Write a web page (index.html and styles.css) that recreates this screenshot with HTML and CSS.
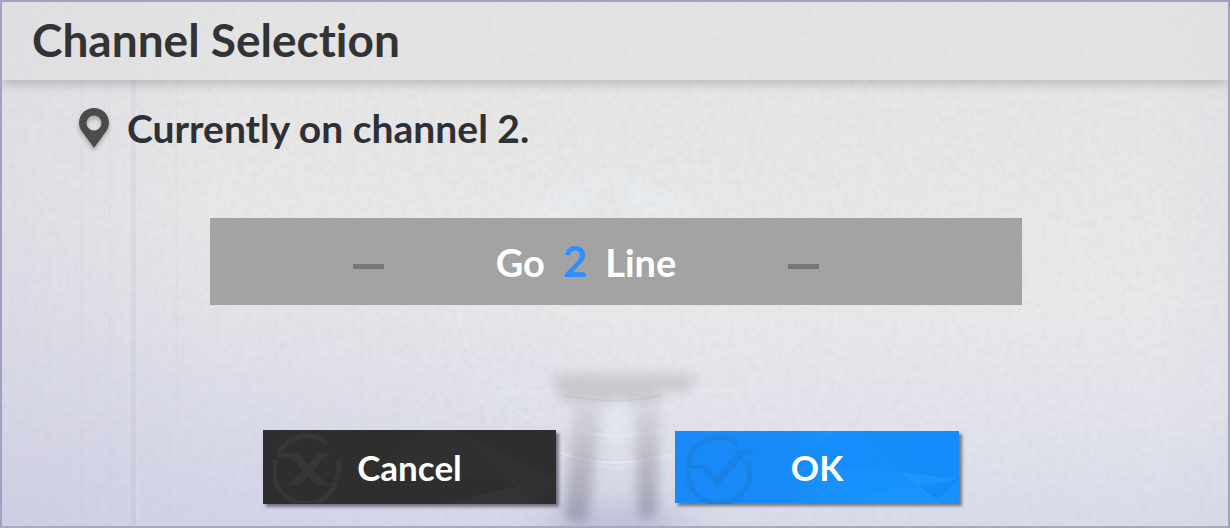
FILE: index.html
```html
<!DOCTYPE html>
<html lang="en">
<head>
<meta charset="utf-8">
<meta name="viewport" content="width=device-width, initial-scale=1">
<title>Channel Selection</title>
<link rel="stylesheet" href="styles.css">
</head>
<body>
<main class="dialog" role="dialog" aria-labelledby="dialog-title">
  <svg class="scene" viewBox="0 0 1230 528" preserveAspectRatio="xMidYMid slice" aria-hidden="true">
    <defs>
      <filter id="grain" x="0" y="0" width="100%" height="100%">
        <feTurbulence type="fractalNoise" baseFrequency="0.14" numOctaves="3" seed="4"/>
        <feColorMatrix values="0 0 0 0 0.45  0 0 0 0 0.45  0 0 0 0 0.48  0.22 0 0 0 -0.085"/>
      </filter>
      <filter id="soft" x="-30%" y="-30%" width="160%" height="160%"><feGaussianBlur stdDeviation="6"/></filter>
      <filter id="mist" x="-50%" y="-50%" width="200%" height="200%"><feGaussianBlur stdDeviation="18"/></filter>
      <linearGradient id="leg" x1="0" y1="0" x2="0" y2="1">
        <stop offset="0" stop-color="#8d8a90" stop-opacity="0.08"/>
        <stop offset="0.5" stop-color="#8d8a96" stop-opacity="0.45"/>
        <stop offset="1" stop-color="#85849a" stop-opacity="0.65"/>
      </linearGradient>
    </defs>
    <ellipse cx="615" cy="548" rx="80" ry="44" fill="#a2a5c5" opacity="0.5" filter="url(#mist)"/>
    <g fill="none" stroke="#f0f3f5">
      <circle cx="612" cy="306" r="162" stroke-width="3" opacity="0.14"/>
      <circle cx="612" cy="306" r="130" stroke-width="2" opacity="0.14"/>
      <path d="M455 300Q470 395 540 425M495 392H740" stroke-width="3" opacity="0.2"/>
      <path d="M556 452Q615 475 678 452" stroke-width="2" opacity="0.55"/>
      <path d="M580 431Q618 442 660 431" stroke-width="3" opacity="0.35"/>
    </g>
    <path d="M612 172L500 218H575ZM612 172L640 218H720Z" fill="#eaf0f4" opacity="0.5" filter="url(#soft)"/>
    <path d="M552 374H698L690 392H662L655 402H560Z" fill="#99989a" opacity="0.34" filter="url(#soft)"/>
    <path d="M565 396Q620 406 662 396" fill="none" stroke="#a0a0a4" stroke-width="2" opacity="0.16"/>
    <path d="M574 400H602L588 520Q577 530 564 516Z" fill="url(#leg)" filter="url(#soft)"/>
    <path d="M634 400H660L657 515Q646 525 638 514Z" fill="url(#leg)" filter="url(#soft)"/>
    <ellipse cx="618" cy="424" rx="11" ry="20" fill="#e5ebf3" opacity="0.8" filter="url(#soft)"/>
    <path d="M132 80V528" stroke="#a9abcf" stroke-width="5" opacity="0.14"/>
    <path d="M136 80V528" stroke="#e9e6e0" stroke-width="2" opacity="0.25"/>
    <path d="M108 80V528M80 80V528M175 80V400" stroke="#b3b3d4" stroke-width="2" opacity="0.07"/>
    <rect width="1230" height="528" filter="url(#grain)"/>
  </svg>

  <header class="dialog-header">
    <h1 class="dialog-title" id="dialog-title">Channel Selection</h1>
  </header>

  <div class="dialog-body">
    <p class="status">
      <svg class="pin" viewBox="0 0 30 40" aria-hidden="true">
        <path fill="#4b4b4b" fill-rule="evenodd" d="M15 0C6.500 0 0 6.500 0 15C0 19 2 22.500 4.500 25.500L15 40L25.500 25.500C28 22.500 30 19 30 15C30 6.500 23.500 0 15 0ZM15 7.500A7.500 7.500 0 1 1 15 22.500A7.500 7.500 0 1 1 15 7.500Z"/>
      </svg>
      <span>Currently on channel 2.</span>
    </p>

    <div class="picker">
      <div class="stepper" role="group" aria-label="Channel">
        <button class="step" type="button" aria-label="Previous channel"><span class="dash"></span></button>
        <p class="choice"><span>Go</span><output class="channel">2</output><span>Line</span></p>
        <button class="step" type="button" aria-label="Next channel"><span class="dash"></span></button>
      </div>
    </div>

    <div class="actions">
      <button class="action cancel" type="button">
        <svg class="action-art" viewBox="0 0 292 74" preserveAspectRatio="none" aria-hidden="true">
          <path d="M110 38L165 0H190L263 74H190L260 53Z" fill="#fff" opacity="0.012"/>
          <path d="M190 0L270 74L292 50Z" fill="#fff" opacity="0.015"/>
          <path d="M175 74L292 48L255 55L270 74Z" fill="#fff" opacity="0.025"/>
        </svg>
        <svg class="emblem" viewBox="0 0 70 70" aria-hidden="true">
          <g fill="none" stroke="currentColor" stroke-width="5">
            <path d="M5 22A31 31 0 0 1 54 11"/>
            <path d="M3 27A32 32 0 0 0 63 50"/>
            <path d="M65 26A32 32 0 0 1 63 48"/>
          </g>
          <path fill="currentColor" d="M4 20H25L35 31L46 20H57L40 37L56 53H45L35 43L25 53H14L30 37L19 25H4ZM60 48H66L63 53H56Z"/>
        </svg>
        <span class="action-label">Cancel</span>
      </button>
      <button class="action ok" type="button">
        <svg class="action-art" viewBox="0 0 284 72" preserveAspectRatio="none" aria-hidden="true">
          <defs>
            <linearGradient id="glow" x1="0" x2="1">
              <stop offset="0.4" stop-color="#1794ff" stop-opacity="0"/>
              <stop offset="0.54" stop-color="#1794ff" stop-opacity="0.8"/>
              <stop offset="1" stop-color="#1794ff" stop-opacity="0.6"/>
            </linearGradient>
          </defs>
          <path d="M0 0H284V72H0Z" fill="url(#glow)"/>
          <path d="M162 0H180L230 42L150 35L125 28Z" fill="#0c7bea" opacity="0.16"/>
          <path d="M180 0H284V48L228 41Z" fill="#0c80f0" opacity="0.22"/>
          <path d="M180 0L262 72" stroke="#2a9cff" opacity="0.45"/>
          <path d="M228 42L284 48L243 55Z" fill="#2ca2ff" opacity="0.3"/>
          <path d="M182 65L284 48L250 60L262 72H205Z" fill="#23a0ff" opacity="0.25"/>
          <path d="M243 55L284 48L262 68Z" fill="#0873df" opacity="0.22"/>
        </svg>
        <svg class="emblem" viewBox="0 0 70 70" aria-hidden="true">
          <g fill="none" stroke="currentColor" stroke-width="5">
            <path d="M3 31A31 31 0 0 1 53 10"/>
            <path d="M3 36A31 31 0 1 0 63 28"/>
          </g>
          <path fill="currentColor" d="M1 31H23L32 42L53 16H70L66 20H60L32 54L17 35H1Z"/>
        </svg>
        <span class="action-label">OK</span>
      </button>
    </div>
  </div>
</main>
</body>
</html>
```
FILE: styles.css
```css
* {
  box-sizing: border-box;
}

body {
  margin: 0;
  font-family: Lato, "Open Sans", sans-serif;
  font-weight: 700;
  font-variant-ligatures: none;
}

button {
  margin: 0;
  padding: 0;
  border: 0;
  font: inherit;
  cursor: pointer;
}

.dialog {
  position: relative;
  display: flex;
  flex-direction: column;
  min-height: 100vh;
  overflow: hidden;
  border: 2px solid #a2a0c3;
  border-bottom-color: #a6a9c0;
  background:
    radial-gradient(ellipse at 0 100%, rgba(200, 200, 226, 0.55), rgba(215, 215, 230, 0) 45%),
    linear-gradient(to right, rgba(212, 211, 226, 0.4), rgba(215, 215, 228, 0) 18%, rgba(215, 215, 228, 0) 94%, rgba(205, 204, 226, 0.15)),
    linear-gradient(#e5e5e5, #e8e9ea 58%, #e4e5ec 75%, #d9dbe9);
}

.scene {
  position: absolute;
  inset: 0;
  width: 100%;
  height: 100%;
}

.dialog-header {
  position: relative;
  padding: 10px 30px 12px;
  background: rgba(226, 226, 226, 0.4);
  box-shadow: 0 4px 10px rgba(90, 90, 90, 0.3);
}

.dialog-title {
  margin: 0;
  color: #333;
  font-size: 46px;
  font-weight: 700;
  line-height: 56px;
}

.dialog-body {
  position: relative;
  display: flex;
  flex: 1;
  flex-direction: column;
  padding: 24px 6px 22px 8px;
}

.status {
  display: flex;
  align-items: center;
  gap: 18px;
  margin: 0 0 66px 69px;
  color: #2d3036;
  font-size: 39px;
  line-height: 48px;
}

.pin {
  width: 30px;
  height: 40px;
  filter: drop-shadow(0 3px 2px rgba(0, 0, 0, 0.25));
}

.picker {
  display: flex;
  justify-content: center;
  width: 67%;
  margin: 0 auto;
  padding-right: 60px;
  background: #a3a3a4;
}

.stepper {
  display: flex;
  align-items: center;
  justify-content: space-between;
  width: 500px;
  min-height: 87px;
}

.step {
  display: grid;
  place-items: center;
  width: 65px;
  height: 65px;
  padding-top: 10px;
  background: none;
}

.dash {
  width: 31px;
  height: 5px;
  background: #777;
}

.choice {
  display: flex;
  align-items: baseline;
  gap: 18px;
  margin: 0;
  color: #fff;
  font-size: 38px;
  line-height: 48px;
}

.channel {
  color: #2f8fff;
  font-size: 42px;
}

.actions {
  display: flex;
  align-items: center;
  justify-content: center;
  gap: 119px;
  margin-top: auto;
  padding-right: 10px;
}

.action {
  position: relative;
  color: #fff;
  font-size: 35px;
  line-height: 44px;
  box-shadow: 3px 3px 3px rgba(50, 50, 65, 0.6);
}

.cancel {
  width: 293px;
  height: 74px;
  background: #2e2e2e;
}

.ok {
  width: 284px;
  height: 72px;
  background: #188af7;
}

.action-art {
  position: absolute;
  inset: 0;
  width: 100%;
  height: 100%;
}

.emblem {
  position: absolute;
  top: 3px;
  left: 10px;
  width: 70px;
  height: 70px;
}

.cancel .emblem {
  color: #363636;
}

.ok .emblem {
  color: #1a82e4;
}

.action-label {
  position: relative;
}
```
